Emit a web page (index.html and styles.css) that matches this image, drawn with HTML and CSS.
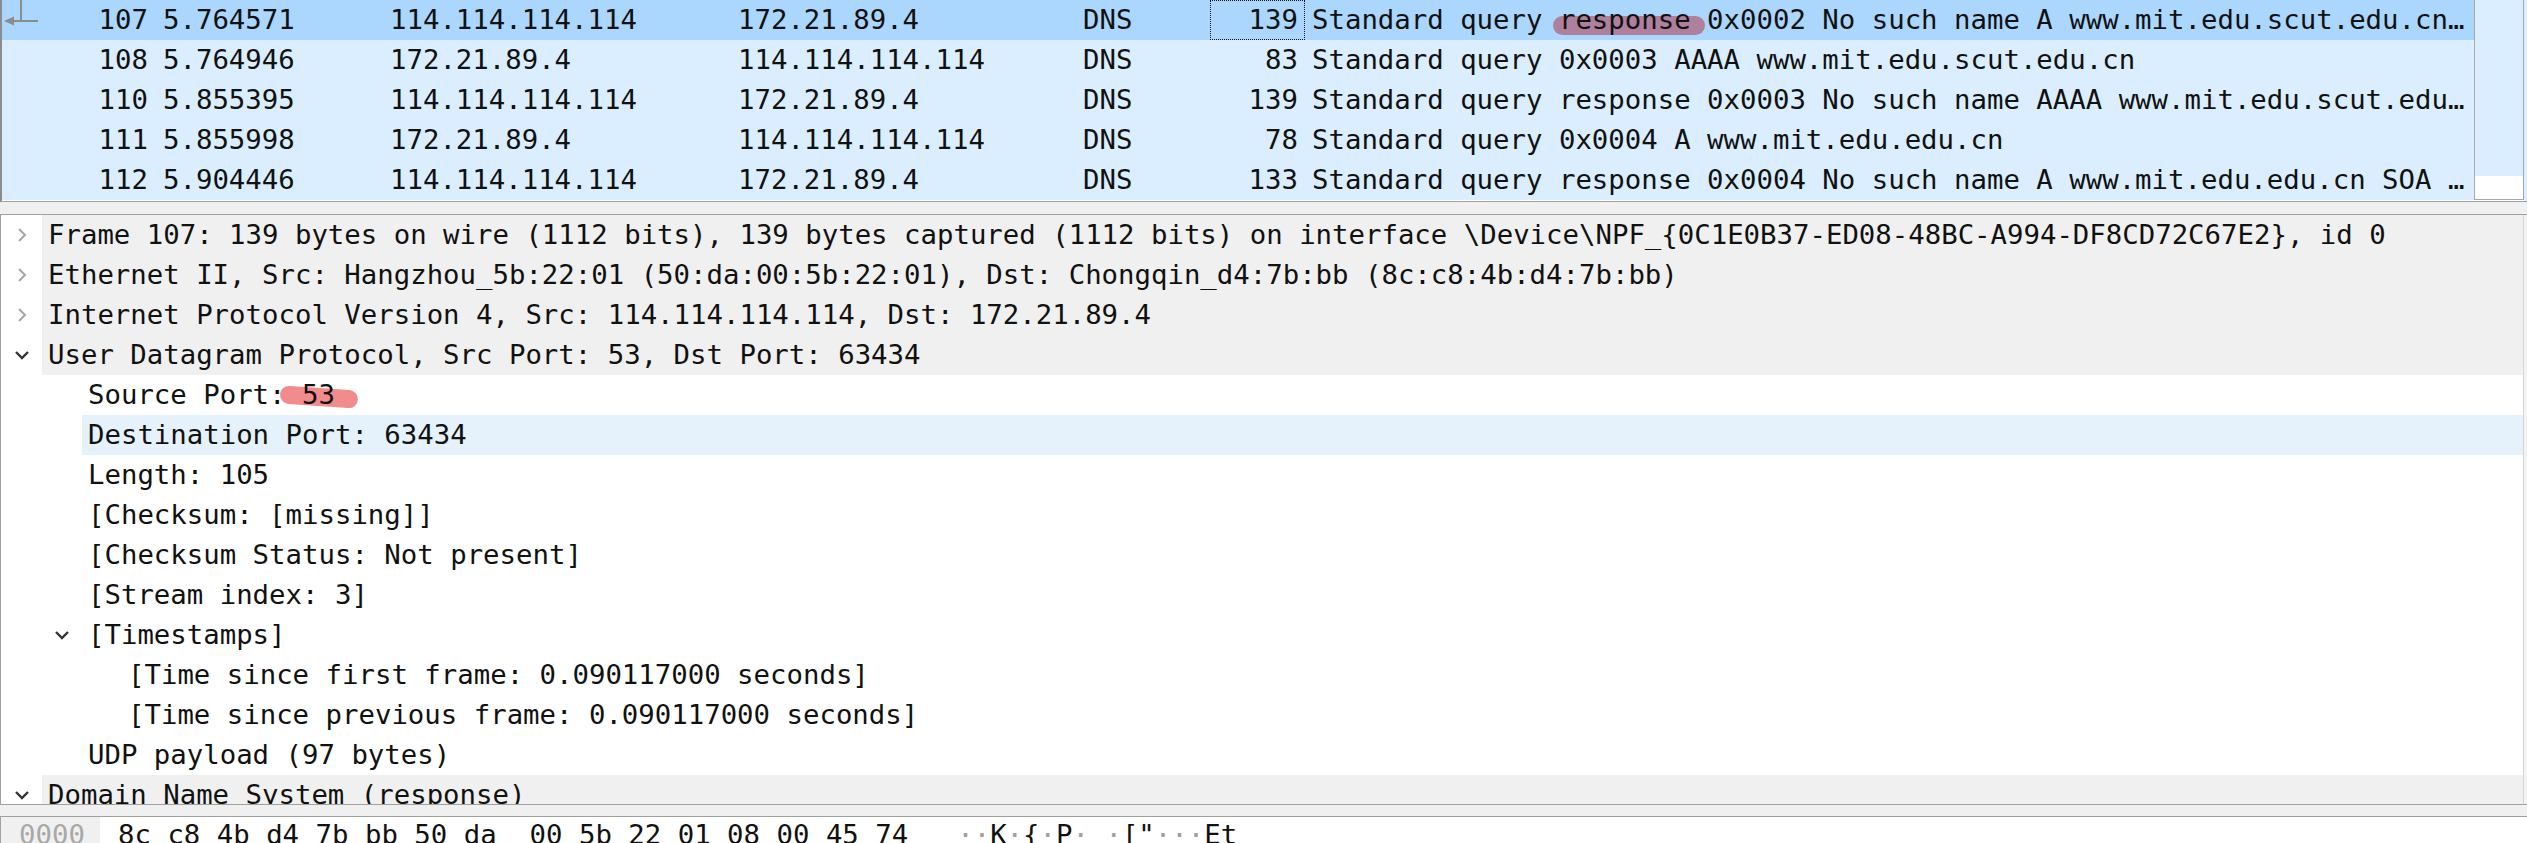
FILE: index.html
```html
<!DOCTYPE html>
<html>
<head>
<meta charset="utf-8">
<link rel="stylesheet" href="styles.css">
</head>
<body>
<div class="app">
  <div class="plist">
    <div class="prows">
      <div class="prow sel">
        <div class="c no"><svg class="rel" width="40" height="40" viewBox="0 0 40 40"><path d="M19 0 V21 M10 21 H36" stroke="#8c8c8c" stroke-width="2" fill="none"/><path d="M2 21 L12 16.5 L12 25.5 Z" fill="#8c8c8c"/></svg><span class="num">107</span></div>
        <div class="c time">5.764571</div>
        <div class="c src">114.114.114.114</div>
        <div class="c dst">172.21.89.4</div>
        <div class="c proto">DNS</div>
        <div class="c len focus">139</div>
        <div class="c info">Standard query <span class="mk1">response</span> 0x0002 No such name A www.mit.edu.scut.edu.cn…</div>
      </div>
      <div class="prow">
        <div class="c no"><span class="num">108</span></div>
        <div class="c time">5.764946</div>
        <div class="c src">172.21.89.4</div>
        <div class="c dst">114.114.114.114</div>
        <div class="c proto">DNS</div>
        <div class="c len">83</div>
        <div class="c info">Standard query 0x0003 AAAA www.mit.edu.scut.edu.cn</div>
      </div>
      <div class="prow">
        <div class="c no"><span class="num">110</span></div>
        <div class="c time">5.855395</div>
        <div class="c src">114.114.114.114</div>
        <div class="c dst">172.21.89.4</div>
        <div class="c proto">DNS</div>
        <div class="c len">139</div>
        <div class="c info">Standard query response 0x0003 No such name AAAA www.mit.edu.scut.edu…</div>
      </div>
      <div class="prow">
        <div class="c no"><span class="num">111</span></div>
        <div class="c time">5.855998</div>
        <div class="c src">172.21.89.4</div>
        <div class="c dst">114.114.114.114</div>
        <div class="c proto">DNS</div>
        <div class="c len">78</div>
        <div class="c info">Standard query 0x0004 A www.mit.edu.edu.cn</div>
      </div>
      <div class="prow">
        <div class="c no"><span class="num">112</span></div>
        <div class="c time">5.904446</div>
        <div class="c src">114.114.114.114</div>
        <div class="c dst">172.21.89.4</div>
        <div class="c proto">DNS</div>
        <div class="c len">133</div>
        <div class="c info">Standard query response 0x0004 No such name A www.mit.edu.edu.cn SOA …</div>
      </div>
    </div>
    <div class="minimap"><div class="mm-fill"></div></div>
    <div class="vstrip"></div>
  </div>

  <div class="split"></div>

  <div class="details">
    <div class="dtree">
      <div class="drow l0"><span class="tog"><svg width="10" height="16" viewBox="0 0 10 16"><polyline points="2,2 8,8 2,14" fill="none" stroke="#a6a6a6" stroke-width="2"/></svg></span><span class="lbl">Frame 107: 139 bytes on wire (1112 bits), 139 bytes captured (1112 bits) on interface \Device\NPF_{0C1E0B37-ED08-48BC-A994-DF8CD72C67E2}, id 0</span></div>
      <div class="drow l0"><span class="tog"><svg width="10" height="16" viewBox="0 0 10 16"><polyline points="2,2 8,8 2,14" fill="none" stroke="#a6a6a6" stroke-width="2"/></svg></span><span class="lbl">Ethernet II, Src: Hangzhou_5b:22:01 (50:da:00:5b:22:01), Dst: Chongqin_d4:7b:bb (8c:c8:4b:d4:7b:bb)</span></div>
      <div class="drow l0"><span class="tog"><svg width="10" height="16" viewBox="0 0 10 16"><polyline points="2,2 8,8 2,14" fill="none" stroke="#a6a6a6" stroke-width="2"/></svg></span><span class="lbl">Internet Protocol Version 4, Src: 114.114.114.114, Dst: 172.21.89.4</span></div>
      <div class="drow l0"><span class="tog"><svg width="16" height="10" viewBox="0 0 16 10"><polyline points="2,2 8,8 14,2" fill="none" stroke="#333" stroke-width="2.4"/></svg></span><span class="lbl">User Datagram Protocol, Src Port: 53, Dst Port: 63434</span></div>
      <div class="drow l1"><span class="ind"></span><span class="tog"></span><span class="lbl">Source Port: <span class="mk2">53</span></span></div>
      <div class="drow l1 hover"><span class="ind"></span><span class="tog"></span><span class="lbl">Destination Port: 63434</span></div>
      <div class="drow l1"><span class="ind"></span><span class="tog"></span><span class="lbl">Length: 105</span></div>
      <div class="drow l1"><span class="ind"></span><span class="tog"></span><span class="lbl">[Checksum: [missing]]</span></div>
      <div class="drow l1"><span class="ind"></span><span class="tog"></span><span class="lbl">[Checksum Status: Not present]</span></div>
      <div class="drow l1"><span class="ind"></span><span class="tog"></span><span class="lbl">[Stream index: 3]</span></div>
      <div class="drow l1"><span class="ind"></span><span class="tog"><svg width="16" height="10" viewBox="0 0 16 10"><polyline points="2,2 8,8 14,2" fill="none" stroke="#333" stroke-width="2.4"/></svg></span><span class="lbl">[Timestamps]</span></div>
      <div class="drow l2"><span class="ind"></span><span class="tog"></span><span class="lbl">[Time since first frame: 0.090117000 seconds]</span></div>
      <div class="drow l2"><span class="ind"></span><span class="tog"></span><span class="lbl">[Time since previous frame: 0.090117000 seconds]</span></div>
      <div class="drow l1"><span class="ind"></span><span class="tog"></span><span class="lbl">UDP payload (97 bytes)</span></div>
      <div class="drow l0"><span class="tog"><svg width="16" height="10" viewBox="0 0 16 10"><polyline points="2,2 8,8 14,2" fill="none" stroke="#333" stroke-width="2.4"/></svg></span><span class="lbl">Domain Name System (response)</span></div>
    </div>
    <div class="dscroll"></div>
  </div>

  <div class="split2"></div>

  <div class="hex">
    <div class="off">0000</div>
    <div class="hexb">8c c8 4b d4 7b bb 50 da  00 5b 22 01 08 00 45 74</div>
    <div class="asc"><span class="np">··</span>K<span class="np">·</span>{<span class="np">·</span>P<span class="np">·</span> <span class="np">·</span>["<span class="np">···</span>Et</div>
  </div>
</div>
</body>
</html>
```

FILE: styles.css
```css
html, body {
  margin: 0;
  padding: 0;
}

body {
  width: 2527px;
  height: 843px;
  overflow: hidden;
  background: #f0f0f0;
  font-family: "DejaVu Sans Mono", "Liberation Mono", monospace;
  font-size: 27.35px;
  color: #111;
}

.app {
  display: flex;
  flex-direction: column;
  height: 843px;
}

/* ---------- packet list ---------- */
.plist {
  display: flex;
  height: 201px;
  flex: none;
  border-left: 2px solid #8c8c8c;
  border-bottom: 1px solid #a0a0a0;
  background: #ffffff;
}

.prows {
  width: 2472px;
  flex: none;
  background: #ffffff;
}

.prow {
  display: grid;
  grid-template-columns: 150px 230px 348px 345px 134px 96px 1fr;
  height: 40px;
  line-height: 40px;
  background: #daeeff;
  white-space: pre;
  isolation: isolate;
}

.prow.sel {
  background: #abd6fe;
}

.c {
  overflow: hidden;
  height: 40px;
  box-sizing: border-box;
}

.no {
  display: flex;
  align-items: center;
  padding-right: 4px;
}

.no .rel {
  flex: none;
}

.no .num {
  margin-left: auto;
}

.time {
  padding-left: 11px;
}

.src,
.dst,
.proto {
  padding-left: 8px;
}

.len {
  text-align: right;
  padding-right: 7px;
}

.len.focus {
  outline: 1px dotted #111;
  outline-offset: -1px;
  margin-left: 1px;
}

.info {
  padding-left: 7px;
}

.mk1 {
  position: relative;
}

.mk1::before {
  content: "";
  position: absolute;
  left: -6px;
  right: -14px;
  top: 12px;
  height: 19px;
  border-radius: 10px;
  background: rgba(178, 58, 78, 0.55);
  z-index: -1;
}

.minimap {
  width: 48px;
  flex: none;
  border-left: 1px solid #a8a8a8;
  border-right: 1px solid #a8a8a8;
  border-bottom: 1px solid #a8a8a8;
  background: #ffffff;
  display: flex;
  flex-direction: column;
  height: 199px;
}

.mm-fill {
  height: 176px;
  background: #daeeff;
}

.vstrip {
  width: 3px;
  flex: none;
  background: #daeeff;
}

/* ---------- splitters ---------- */
.split {
  height: 12px;
  flex: none;
  background: #f0f0f0;
}

.split2 {
  height: 11px;
  flex: none;
  background: #f0f0f0;
}

/* ---------- details tree ---------- */
.details {
  display: flex;
  height: 589px;
  flex: none;
  border-top: 1px solid #a0a0a0;
  border-bottom: 1px solid #a0a0a0;
  border-left: 1px solid #a0a0a0;
  background: #ffffff;
  overflow: hidden;
}

.dtree {
  flex: 1;
  min-width: 0;
  overflow: hidden;
}

.drow {
  display: flex;
  height: 40px;
  line-height: 40px;
  white-space: pre;
}

.ind {
  flex: none;
}

.l1 .ind {
  width: 40px;
}

.l2 .ind {
  width: 80px;
}

.tog {
  width: 41px;
  flex: none;
  display: flex;
  align-items: center;
  justify-content: center;
}

.lbl {
  flex: 1;
  padding-left: 6px;
  isolation: isolate;
}

.l0 .lbl {
  background: #f0f0f0;
}

.hover .lbl {
  background: #e5f1fb;
}

.mk2 {
  position: relative;
}

.mk2::before {
  content: "";
  position: absolute;
  left: -22px;
  width: 78px;
  top: 9px;
  height: 18px;
  border-radius: 9px;
  background: rgba(238, 100, 100, 0.75);
  transform: rotate(4deg);
  z-index: -1;
}

.dscroll {
  width: 4px;
  flex: none;
  background: #f3f3f3;
  border-left: 1px solid #d6d6d6;
  box-sizing: border-box;
}

/* ---------- hex pane ---------- */
.hex {
  display: flex;
  flex: 1;
  border-top: 1px solid #a0a0a0;
  border-left: 1px solid #a0a0a0;
  background: #ffffff;
  overflow: hidden;
  white-space: pre;
  line-height: 36px;
}

.off {
  width: 81px;
  padding-left: 18px;
  background: #f0f0f0;
  color: #a8a8a8;
  flex: none;
}

.hexb {
  padding-left: 18px;
  flex: none;
}

.asc {
  padding-left: 49px;
  flex: none;
}

.np {
  color: #a0a0a0;
}
```
